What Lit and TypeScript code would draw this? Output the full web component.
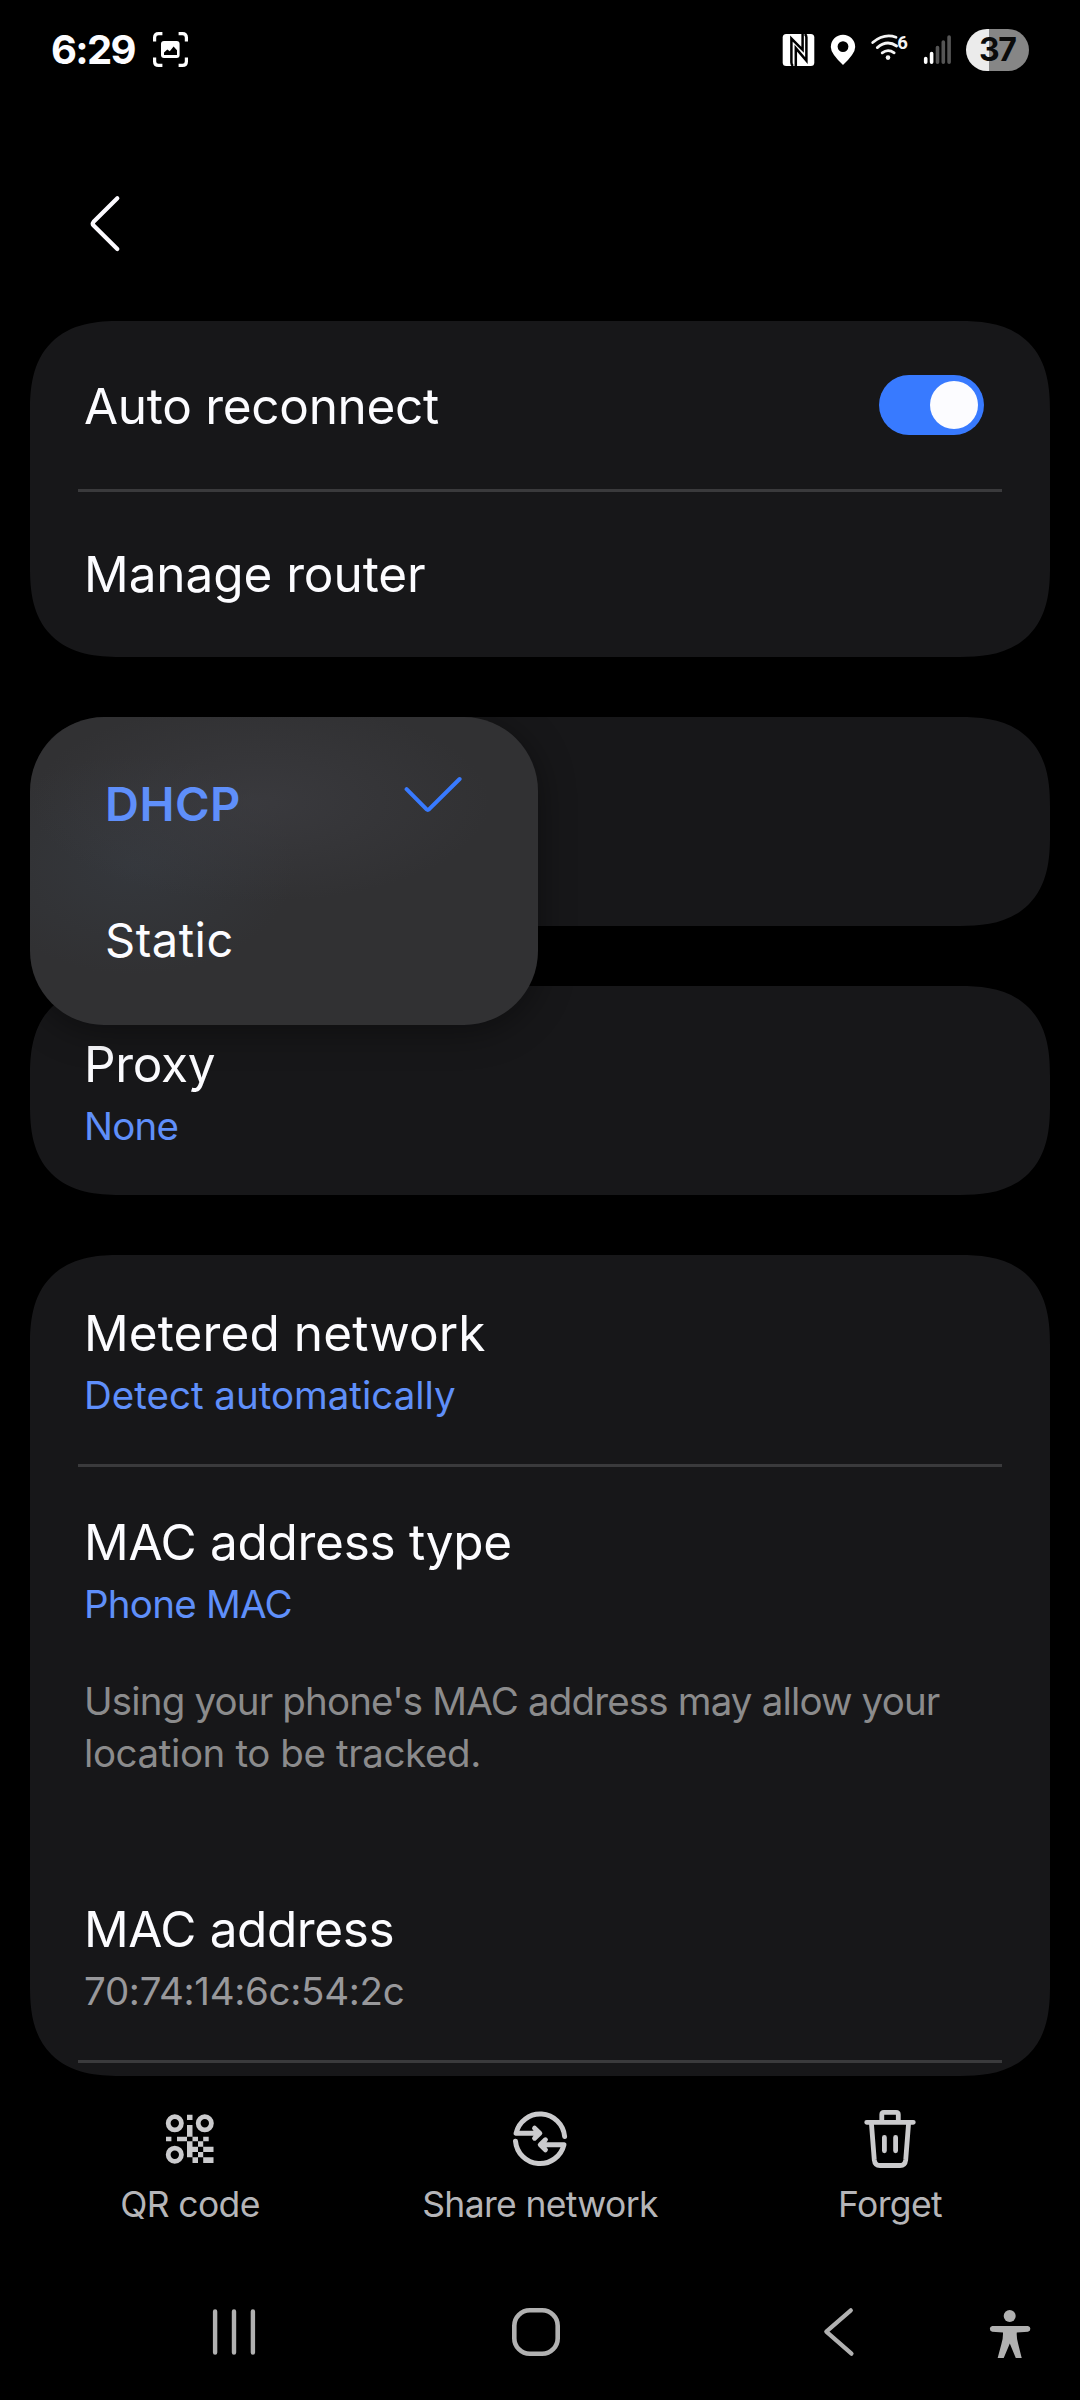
import { LitElement, html, css } from "lit";
import { customElement, property } from "lit/decorators.js";

@customElement("setting-row")
class SettingRow extends LitElement {
  @property() label = "";
  @property() summary = "";
  @property() tone = "accent";

  static styles = css`
    :host { display: block; }
    .row { box-sizing: border-box; padding: 0 66px 0 54px; display: flex; color: #fcfcff; }
    .single { height: 168px; padding-top: 2px; align-items: center; justify-content: space-between; }
    .double { height: 209px; padding-top: 45px; flex-direction: column; }
    .title { font-size: 49.5px; line-height: 66px; letter-spacing: var(--title-track, -0.3px); white-space: nowrap; }
    .summary { font-size: 38.5px; line-height: 58px; letter-spacing: var(--summary-track, -0.4px); white-space: nowrap; }
    .accent { color: #5f8ffa; }
    .muted { color: #98989b; }
  `;

  render() {
    return this.summary
      ? html`<div class="row double">
          <span class="title">${this.label}</span>
          <span class="summary ${this.tone}">${this.summary}</span>
        </div>`
      : html`<div class="row single">
          <span class="title">${this.label}</span><slot></slot>
        </div>`;
  }
}

const captureIcon = html`<svg width="36" height="36" viewBox="153 33 36 36" fill="none">
  <path d="M154.6 42.4V38.6Q154.6 34.6 158.6 34.6H162.4M178.6 34.6H182.4Q186.4 34.6 186.4 38.6V42.4M186.4 58.6V62.4Q186.4 66.4 182.4 66.4H178.6M162.4 66.4H158.6Q154.6 66.4 154.6 62.4V58.6" stroke="#fff" stroke-width="3.2"/>
  <rect x="161" y="42" width="18.6" height="17" rx="3" fill="#fff"/>
  <path d="M164 56V53.6L167.3 50.5L169.8 52.2L173.6 47.6L177 51.2V56Z" fill="#000"/>
</svg>`;

const statusIcons = html`<svg width="248" height="44" viewBox="782 28 248 44" fill="none">
  <rect x="782.7" y="34" width="31.6" height="32" rx="3.5" fill="#fff"/>
  <path d="M802.6 34V49.8L791.4 38.6V62.5Q791.4 65 793 66M795.8 66V48.2L806.4 60.6V37.2Q806.4 35.2 804.8 34" stroke="#000" stroke-width="2.5"/>
  <path fill-rule="evenodd" d="M843 65Q830.8 53.5 830.8 47A12.2 12.2 0 0 1 855.2 47Q855.2 53.5 843 65ZM843 41.2A5.4 5.4 0 1 0 843 52A5.4 5.4 0 1 0 843 41.2Z" fill="#fff"/>
  <g stroke="#f4f4f4" stroke-width="2.8" stroke-linecap="round">
    <path d="M882.2 52.8Q888 48.4 894.2 52.8M877.3 47.6Q887 39.4 896.6 46M872.7 42.5Q884 33 896 37.2"/>
  </g>
  <circle cx="888" cy="57.6" r="2.3" fill="#f4f4f4"/>
  <text x="897.2" y="48.6" class="gen">6</text>
  <g stroke-width="3.6" stroke-linecap="round">
    <path d="M925.7 58.5V62.3M931.6 53.5V62.3" stroke="#fff"/>
    <path d="M937.5 47.5V62.3M943.3 42V62.3M949.1 37V62.3" stroke="#555"/>
  </g>
  <path d="M989 29H987A21 21 0 0 0 987 71H989Z" fill="#ebebeb"/>
  <path d="M989 29H1008A21 21 0 0 1 1008 71H989Z" fill="#868686"/>
  <text x="997.2" y="61" class="charge">37</text>
</svg>`;

const tint = "#cbcbcd";

const qrIcon = html`<svg width="56" height="60" viewBox="162 2109 56 60" fill="none">
  <g stroke=${tint} stroke-width="4.8">
    <circle cx="174.8" cy="2123.3" r="6.6"/><circle cx="204.8" cy="2123.3" r="6.6"/><circle cx="174.8" cy="2154.7" r="6.6"/>
  </g>
  <path fill=${tint} d="M187 2114.7h5.5v5.3h-5.5zM187 2125h5.5v11.7h-5.5zM166 2136.7h5.4v4.6h-5.4zM177 2136.7h10v4.6h-10zM192.5 2136.7h5.5v4.6h-5.5zM203.2 2136.7h5.5v4.6h-5.5zM187 2141.3h5.5v16h-5.5zM198 2141.3h5.2v5.4h-5.2zM192.5 2146.7h5.5v5.3h-5.5zM203.2 2146.7h10.3v5.3h-10.3zM198 2152h5.2v5.3h-5.2zM192.5 2157.3h5.5v5.7h-5.5zM203.2 2157.3h10.3v5.7h-10.3z"/>
</svg>`;

const shareIcon = html`<svg width="60" height="60" viewBox="510 2109 60 60" fill="none" stroke=${tint} stroke-width="5" stroke-linecap="round" stroke-linejoin="round">
  <path d="M564.6 2136.4A24.6 24.6 0 0 0 516.1 2133.2H539.5M534.6 2128.2L539.8 2133.2L534.6 2138.2"/>
  <path d="M515.5 2141.2A24.6 24.6 0 0 0 563.9 2144.8H541M545.4 2139.8L540.3 2144.8L545.4 2149.8"/>
</svg>`;

const trashIcon = html`<svg width="60" height="60" viewBox="860 2109 60 60" fill="none" stroke=${tint} stroke-width="4.8" stroke-linecap="round" stroke-linejoin="round">
  <path d="M866.7 2122.3H913.3M881.8 2122V2114.5Q881.8 2112.4 883.9 2112.4H896.1Q898.3 2112.4 898.3 2114.5V2122"/>
  <path d="M871.4 2123L874.3 2160Q874.9 2165.5 880 2165.5H900Q905.1 2165.5 905.7 2160L908.6 2123M884.4 2137.4V2150.8M895.6 2137.4V2150.8"/>
</svg>`;

@customElement("app-root")
class AppRoot extends LitElement {
  static styles = css`
    :host { display: block; }
    svg { display: block; flex: none; }
    .screen {
      width: 1080px; height: 2400px; background: #000; color: #fcfcff; overflow: hidden;
      display: flex; flex-direction: column; font-family: Inter, Roboto, "Liberation Sans", sans-serif;
    }
    .status { height: 100px; box-sizing: border-box; padding: 0 50px 0 51px; display: flex; align-items: center; }
    .clock { font-size: 40px; font-weight: 700; line-height: 60px; width: 102px; letter-spacing: -1.7px; white-space: nowrap; }
    .status-right { margin-left: auto; }
    .gen { font: 700 18.5px Roboto, sans-serif; fill: #f4f4f4; }
    .charge { font: 700 32px Inter, sans-serif; letter-spacing: -1.4px; text-anchor: middle; fill: #0a0a0a; }
    .header { height: 221px; box-sizing: border-box; padding: 93px 0 0 87px; }
    .list { display: flex; flex-direction: column; gap: 60px; padding: 0 30px; }
    .card { background: #171719; border-radius: 76px; overflow: hidden; }
    .anchor { position: relative; height: 209px; z-index: 1; }
    .anchor .card { height: 209px; }
    @supports (corner-shape: superellipse(1.35)) {
      .card { border-radius: 90px; corner-shape: superellipse(1.35); }
    }
    .rule { height: 3px; margin: 0 48px -3px; background: #3a3a3c; }
    .last { height: 821px; }
    .manage { --title-track: -0.08px; }
    .metered { --title-track: 0.1px; --summary-track: 0px; }
    .proxy { --summary-track: -0.8px; }
    .mac-type { --summary-track: -0.75px; }
    .mac { --title-track: -0.4px; --summary-track: -0.3px; }
    .note {
      box-sizing: border-box; height: 178px; margin: 0; padding: 3px 54px 0; color: #8b8b8c;
      font-size: 38.5px; line-height: 51.8px; white-space: nowrap;
    }
    .note span { display: block; letter-spacing: -0.4px; }
    .note .tight { letter-spacing: -0.84px; }
    .toggle {
      width: 105px; height: 60px; border-radius: 30px; background: #387aff; box-sizing: border-box;
      padding: 6px; display: flex; justify-content: flex-end; margin-top: -2px;
    }
    .thumb { width: 48px; height: 48px; border-radius: 50%; background: #fcfcff; }
    .menu {
      position: absolute; left: 0; top: 0; width: 508px; height: 308px; box-sizing: border-box;
      padding-top: 19px; border-radius: 74px;
      background:
        radial-gradient(ellipse 230px 100px at 230px 85px, rgba(66, 66, 72, 0.5), transparent),
        radial-gradient(ellipse 160px 110px at 105px 148px, rgba(56, 62, 70, 0.5), transparent),
        #313133;
      box-shadow: 0 6px 36px rgba(0, 0, 0, 0.4);
    }
    .option {
      height: 136px; display: flex; align-items: center; justify-content: space-between;
      padding: 0 75px; font-size: 47px; line-height: 60px; letter-spacing: 0.5px;
    }
    .chosen { color: #5f8ffa; font-weight: 600; }
    .tick { margin-top: -21px; }
    .actions { display: flex; padding: 33px 15px 0; height: 204px; box-sizing: border-box; }
    .action { width: 350px; display: flex; flex-direction: column; align-items: center; color: #b5b5b8; }
    .action span { font-size: 35.5px; line-height: 48px; margin-top: 12px; letter-spacing: -0.65px; white-space: nowrap; }
    .nav { display: flex; align-items: center; height: 104px; padding-left: 83px; }
    .key { width: 302px; display: flex; justify-content: center; }
    .assist { width: 42px; }
  `;

  private actions = [
    { label: "QR code", icon: qrIcon },
    { label: "Share network", icon: shareIcon },
    { label: "Forget", icon: trashIcon },
  ];

  render() {
    return html`<div class="screen">
      <div class="status">
        <span class="clock">6:29</span>
        ${captureIcon}
        <div class="status-right">${statusIcons}</div>
      </div>
      <div class="header">
        <svg width="36" height="62" viewBox="87 193 36 62" fill="none" stroke="#fcfaff" stroke-width="4.2" stroke-linecap="round" stroke-linejoin="round">
          <path d="M117.3 198.3L93.6 221.8Q91.9 223.7 93.6 225.6L117.3 249"/>
        </svg>
      </div>
      <div class="list">
        <div class="card">
          <setting-row label="Auto reconnect"><div class="toggle"><div class="thumb"></div></div></setting-row>
          <div class="rule"></div>
          <setting-row class="manage" label="Manage router"></setting-row>
        </div>
        <div class="anchor">
          <div class="card"></div>
          <div class="menu">
            <div class="option chosen">
              <span>DHCP</span>
              <svg class="tick" width="60" height="38" viewBox="403 775 60 38" fill="none" stroke="#387aff" stroke-width="4" stroke-linecap="round" stroke-linejoin="round">
                <path d="M406.6 789.2L426.4 809.2Q427.8 810.4 429.2 809.2L459.6 779"/>
              </svg>
            </div>
            <div class="option"><span>Static</span></div>
          </div>
        </div>
        <div class="card"><setting-row class="proxy" label="Proxy" summary="None"></setting-row></div>
        <div class="card last">
          <setting-row class="metered" label="Metered network" summary="Detect automatically"></setting-row>
          <div class="rule"></div>
          <setting-row class="mac-type" label="MAC address type" summary="Phone MAC"></setting-row>
          <p class="note"><span class="tight">Using your phone's MAC address may allow your</span><span>location to be tracked.</span></p>
          <setting-row class="mac" label="MAC address" summary="70:74:14:6c:54:2c" tone="muted"></setting-row>
          <div class="rule"></div>
        </div>
      </div>
      <div class="actions">
        ${this.actions.map((a) => html`<div class="action">${a.icon}<span>${a.label}</span></div>`)}
      </div>
      <div class="nav">
        <div class="key"><svg width="48" height="52" viewBox="210 2306 48 52" fill="none" stroke="#b1b1b1" stroke-width="4.4" stroke-linecap="round">
          <path d="M215.1 2311.4V2352.6M234 2311.4V2352.6M252.9 2311.4V2352.6"/>
        </svg></div>
        <div class="key"><svg width="52" height="52" viewBox="510 2306 52 52" fill="none" stroke="#b1b1b1" stroke-width="4.6">
          <rect x="514.3" y="2310.3" width="43.4" height="43.4" rx="15.5"/>
        </svg></div>
        <div class="key"><svg width="34" height="52" viewBox="821 2306 34 52" fill="none" stroke="#b1b1b1" stroke-width="4.2" stroke-linecap="round" stroke-linejoin="round">
          <path d="M850.8 2310.3L826.3 2331.7L851.5 2353.7"/>
        </svg></div>
        <div class="assist"><svg width="42" height="52" viewBox="989 2302 42 52" fill="#b1b1b1">
          <circle cx="1009.7" cy="2312" r="6"/>
          <path d="M992.2 2322H1028A2.9 2.9 0 0 1 1028 2327.7L1016.8 2328.6Q1016.4 2334 1018.2 2340L1021.4 2352.8A2.8 2.8 0 0 1 1016.2 2355L1009.8 2339.5L1003.3 2355A2.8 2.8 0 0 1 998 2352.8L1001.4 2340Q1003.2 2334 1003 2328.6L992.2 2327.7A2.9 2.9 0 0 1 992.2 2322Z"/>
        </svg></div>
      </div>
    </div>`;
  }
}
